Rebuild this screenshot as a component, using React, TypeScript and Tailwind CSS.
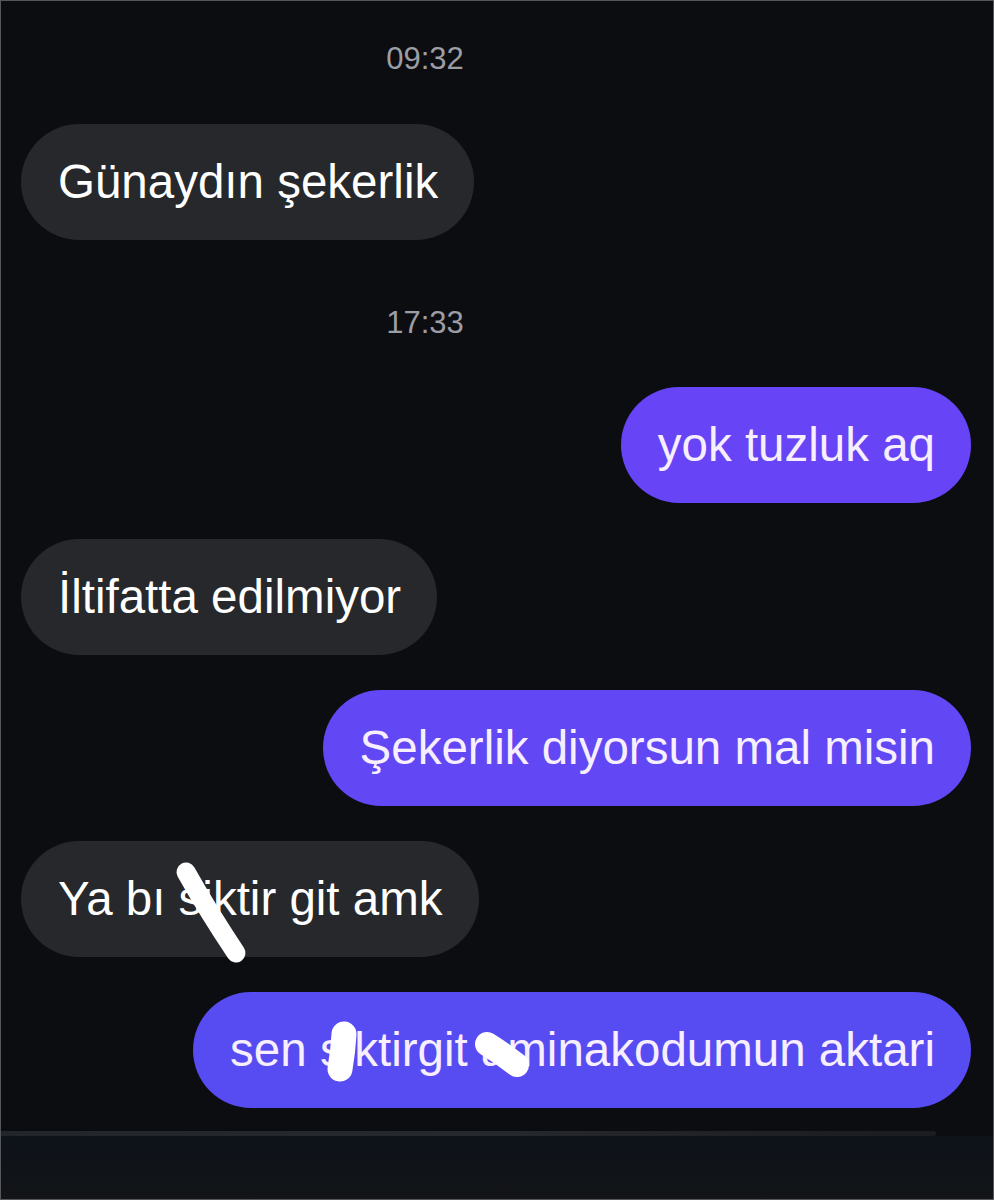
import * as React from "react";

type Side = "in" | "out";

interface BubbleProps {
  side: Side;
  text: string;
  color?: string;
  marks?: { d: string; w: number }[];
  className?: string;
}

const Bubble = ({ side, text, color, marks, className }: BubbleProps) => (
  <div className={`flex w-full ${side === "out" ? "justify-end pr-[22px]" : "justify-start pl-[20px]"} ${className ?? ""}`}>
    <div
      className={`relative flex h-[116px] items-center rounded-full pl-[37px] pr-[36px] ${
        side === "out" ? `${color} text-[#f7efff]` : "bg-[#26282b] text-white"
      }`}
    >
      <span className="whitespace-nowrap text-[47.5px] leading-none">{text}</span>
      {marks && (
        <svg className="pointer-events-none absolute left-0 top-0 overflow-visible" width="10" height="10">
          {marks.map((m, i) => (
            <path key={i} d={m.d} stroke="#ffffff" strokeWidth={m.w} strokeLinecap="round" fill="none" />
          ))}
        </svg>
      )}
    </div>
  </div>
);

const Stamp = ({ time, className }: { time: string; className?: string }) => (
  <div className={`flex h-[32px] w-full items-center justify-center pr-[144px] ${className ?? ""}`}>
    <span className="text-[31px] leading-none text-[#9c9ea5]">{time}</span>
  </div>
);

export default function App() {
  return (
    <div
      className="flex h-[1200px] w-full flex-col overflow-hidden border border-[#55575c] bg-[#0c0d11]"
      style={{ fontFamily: '"Liberation Sans", Arial, sans-serif' }}
    >
      <Stamp time="09:32" className="mt-[41px]" />
      <Bubble side="in" text="Günaydın şekerlik" className="mt-[50px]" />
      <Stamp time="17:33" className="mt-[66px]" />
      <Bubble side="out" text="yok tuzluk aq" color="bg-[#6745f6]" className="mt-[49px]" />
      <Bubble side="in" text="İltifatta edilmiyor" className="mt-[36px]" />
      <Bubble side="out" text="Şekerlik diyorsun mal misin" color="bg-[#6148f4]" className="mt-[35px]" />
      <Bubble
        side="in"
        text="Ya bı siktir git amk"
        className="mt-[35px]"
        marks={[{ d: "M165 31 Q187 70 215 112", w: 19 }]}
      />
      <Bubble
        side="out"
        text="sen siktirgit aminakodumun aktari"
        color="bg-[#574cf2]"
        className="mt-[35px]"
        marks={[
          { d: "M151 42 Q150 60 147 77", w: 25 },
          { d: "M294 52 Q310 62 324 73", w: 24 },
        ]}
      />
      <div className="mt-[23px] h-[5px] w-[935px] rounded-r-full bg-gradient-to-r from-[#222529] via-[#26292d] to-[#1a1c20]" />
      <div className="flex-1 bg-gradient-to-b from-[#0e131a] to-[#121417]" />
    </div>
  );
}
